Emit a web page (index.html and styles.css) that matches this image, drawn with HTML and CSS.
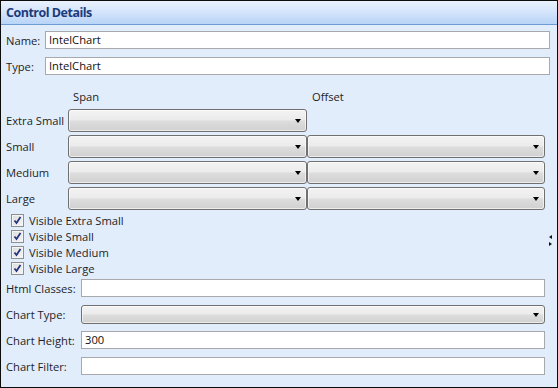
FILE: index.html
```html
<!DOCTYPE html>
<html>
<head>
<meta charset="utf-8">
<link rel="stylesheet" href="styles.css">
</head>
<body>
<div class="panel">
  <div class="header"><span class="title">Control Details</span></div>
  <div class="body">
    <div class="top-fields">
      <div class="frow"><span class="lbl">Name:</span><div class="tbox">IntelChart</div></div>
      <div class="frow"><span class="lbl">Type:</span><div class="tbox">IntelChart</div></div>
    </div>
    <div class="size-grid">
      <span></span><span class="colhead">Span</span><span class="colhead">Offset</span>
      <span class="lbl">Extra Small</span><div class="sel"><i class="arrow"></i></div><span></span>
      <span class="lbl">Small</span><div class="sel"><i class="arrow"></i></div><div class="sel"><i class="arrow"></i></div>
      <span class="lbl">Medium</span><div class="sel"><i class="arrow"></i></div><div class="sel"><i class="arrow"></i></div>
      <span class="lbl">Large</span><div class="sel"><i class="arrow"></i></div><div class="sel"><i class="arrow"></i></div>
    </div>
    <div class="checks">
      <div class="chk"><span class="box"><svg width="9" height="9" viewBox="0 0 9 9"><path d="M1.5 4.5 L3.5 7 L7.5 1" fill="none" stroke="#24367a" stroke-width="1.8"/></svg></span>Visible Extra Small</div>
      <div class="chk"><span class="box"><svg width="9" height="9" viewBox="0 0 9 9"><path d="M1.5 4.5 L3.5 7 L7.5 1" fill="none" stroke="#24367a" stroke-width="1.8"/></svg></span>Visible Small</div>
      <div class="chk"><span class="box"><svg width="9" height="9" viewBox="0 0 9 9"><path d="M1.5 4.5 L3.5 7 L7.5 1" fill="none" stroke="#24367a" stroke-width="1.8"/></svg></span>Visible Medium</div>
      <div class="chk"><span class="box"><svg width="9" height="9" viewBox="0 0 9 9"><path d="M1.5 4.5 L3.5 7 L7.5 1" fill="none" stroke="#24367a" stroke-width="1.8"/></svg></span>Visible Large</div>
    </div>
    <div class="bottom-fields">
      <div class="brow"><span class="lbl">Html Classes:</span><div class="tbox"></div></div>
      <div class="brow"><span class="lbl">Chart Type:</span><div class="sel small"><i class="arrow"></i></div></div>
      <div class="brow"><span class="lbl">Chart Height:</span><div class="tbox">300</div></div>
      <div class="brow"><span class="lbl">Chart Filter:</span><div class="tbox"></div></div>
    </div>
  </div>
  <div class="grip"><i class="gl"></i><i class="gr"></i></div>
</div>
</body>
</html>
```
FILE: styles.css
```css
html, body {
  margin: 0;
  padding: 0;
  background: #ffffff;
}
.panel {
  position: relative;
  width: 558px;
  height: 388px;
  box-sizing: border-box;
  border: 1px solid #0c0c0c;
  background: #e2edfc;
  font-family: "Open Sans", "Noto Sans", sans-serif;
  font-size: 11.2px;
  color: #1e1e1e;
  display: flex;
  flex-direction: column;
}
.header {
  height: 24px;
  border-bottom: 1px solid #6f9bd3;
  background: linear-gradient(to bottom, #eaf2fd 0%, #d3e4fb 50%, #b8d4f7 100%);
  display: flex;
  align-items: center;
  padding-left: 5px;
  box-sizing: border-box;
}
.title {
  font-weight: 700;
  font-size: 12.5px;
  color: #1d3b7b;
  letter-spacing: -0.5px;
}
.body {
  padding: 5px 0 0 5px;
  display: flex;
  flex-direction: column;
}
.lbl {
  white-space: nowrap;
}
.top-fields {
  display: flex;
  flex-direction: column;
  gap: 8px;
  padding-right: 7px;
  margin-top: 1px;
}
.frow {
  display: grid;
  grid-template-columns: 39px 1fr;
  align-items: center;
  height: 18px;
}
.tbox {
  height: 18px;
  box-sizing: border-box;
  border: 1px solid #a7a9ad;
  background: #ffffff;
  padding-left: 3px;
  line-height: 16px;
  font-size: 11.2px;
  color: #111;
}
.size-grid {
  margin-top: 11px;
  display: grid;
  grid-template-columns: 62px 239px 238px;
  grid-template-rows: 20px repeat(4, 23px);
  row-gap: 3px;
  align-items: center;
}
.colhead {
  padding-left: 5px;
}
.sel {
  position: relative;
  height: 23px;
  box-sizing: border-box;
  border: 1px solid #707070;
  border-radius: 3px;
  background: linear-gradient(to bottom, #f3f3f3 0%, #ebebeb 48%, #dddddd 52%, #d0d0d0 100%);
  box-shadow: inset 0 0 0 1px rgba(255,255,255,0.6);
}
.sel.small {
  height: 19px;
}
.arrow {
  position: absolute;
  right: 5px;
  top: 50%;
  margin-top: -2px;
  width: 0;
  height: 0;
  border-left: 3.5px solid transparent;
  border-right: 3.5px solid transparent;
  border-top: 4px solid #000;
}
.checks {
  margin-top: 2px;
  display: flex;
  flex-direction: column;
  padding-left: 5px;
}
.chk {
  height: 16px;
  display: flex;
  align-items: center;
  gap: 5px;
}
.box {
  width: 13px;
  height: 13px;
  box-sizing: border-box;
  border: 1px solid #8e8f8f;
  background: linear-gradient(135deg, #dcdcdc 0%, #f6f6f6 100%);
  box-shadow: inset 0 0 0 1px #f4f4f4;
  display: flex;
  align-items: center;
  justify-content: center;
}
.box svg {
  display: block;
}
.bottom-fields {
  margin-top: 3px;
  display: flex;
  flex-direction: column;
  gap: 8px;
  padding-right: 12px;
}
.brow {
  display: grid;
  grid-template-columns: 75px 1fr;
  align-items: center;
  height: 18px;
}
.grip {
  position: absolute;
  left: 548px;
  top: 234px;
  display: flex;
  flex-direction: column;
  gap: 3px;
}
.gl, .gr {
  display: block;
  width: 0;
  height: 0;
  border-top: 2px solid transparent;
  border-bottom: 2px solid transparent;
}
.gl {
  border-right: 3px solid #111;
}
.gr {
  border-left: 3px solid #111;
}
```
